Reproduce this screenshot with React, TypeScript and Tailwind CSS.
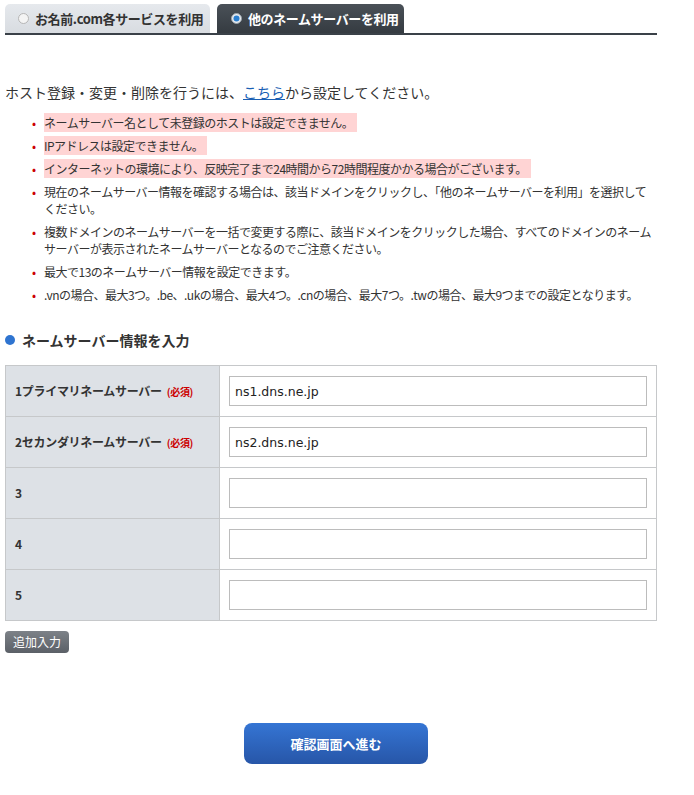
import React from "react";

interface NsRow {
  label: string;
  required: boolean;
  value: string;
}

const rows: NsRow[] = [
  { label: "1プライマリネームサーバー", required: true, value: "ns1.dns.ne.jp" },
  { label: "2セカンダリネームサーバー", required: true, value: "ns2.dns.ne.jp" },
  { label: "3", required: false, value: "" },
  { label: "4", required: false, value: "" },
  { label: "5", required: false, value: "" },
];

const Radio: React.FC<{ on: boolean }> = ({ on }) => (
  <svg width="11" height="11" viewBox="0 0 11 11" className="inline-block mr-[6px] shrink-0">
    <circle cx="5.5" cy="5.5" r="5" fill={on ? "#e8ecf0" : "#f4f4f4"} stroke={on ? "#9aa3ab" : "#b5b5b5"} />
    {on && <circle cx="5.5" cy="5.5" r="3" fill="#2a7fd0" />}
  </svg>
);

const Bullet: React.FC<{ children: React.ReactNode; pink?: boolean }> = ({ children, pink }) => (
  <li className="flex">
    <span className="w-[12px] shrink-0 text-[#c00] text-[12px] leading-[17px]">•</span>
    <span className="leading-[17px]">
      {pink ? <span className="bg-[#ffd4d4] py-[1px] pr-[4px]">{children}</span> : children}
    </span>
  </li>
);

export default function App() {
  return (
    <div
      className="w-[694px] h-[795px] bg-white text-[#333]"
      style={{ fontFamily: '"Noto Sans CJK JP", "DejaVu Sans", sans-serif' }}
    >
      {/* tabs */}
      <div className="pt-[4px] px-[5px]">
        <div className="flex gap-[7px] w-[652px] border-b-2 border-[#3a4148] h-[31px]">
          <div className="w-[205px] h-[29px] rounded-t-[5px] bg-gradient-to-b from-[#e6e9ed] to-[#d8dce1] flex items-center pl-[13px] text-[13px] tracking-[-0.4px] whitespace-nowrap font-bold text-[#333]">
            <Radio on={false} />
            お名前.com各サービスを利用
          </div>
          <div className="w-[187px] h-[29px] rounded-t-[5px] bg-gradient-to-b from-[#4a5158] to-[#353b41] flex items-center pl-[14px] text-[13px] tracking-[-0.4px] whitespace-nowrap font-bold text-white">
            <Radio on={true} />
            他のネームサーバーを利用
          </div>
        </div>
      </div>

      {/* notes */}
      <div className="px-[5px] mt-[47px]">
        <p className="text-[14px] leading-[20px]">
          ホスト登録・変更・削除を行うには、
          <span className="text-[#1a5fb4] underline">こちら</span>
          から設定してください。
        </p>
        <ul className="mt-[12px] ml-[27px] mr-[32px] text-[12px] tracking-[-0.5px] flex flex-col gap-[6px]">
          <Bullet pink>ネームサーバー名として未登録のホストは設定できません。</Bullet>
          <Bullet pink>IPアドレスは設定できません。</Bullet>
          <Bullet pink>インターネットの環境により、反映完了まで24時間から72時間程度かかる場合がございます。</Bullet>
          <Bullet>現在のネームサーバー情報を確認する場合は、該当ドメインをクリックし、「他のネームサーバーを利用」を選択してください。</Bullet>
          <Bullet>複数ドメインのネームサーバーを一括で変更する際に、該当ドメインをクリックした場合、すべてのドメインのネームサーバーが表示されたネームサーバーとなるのでご注意ください。</Bullet>
          <Bullet>最大で13のネームサーバー情報を設定できます。</Bullet>
          <Bullet>.vnの場合、最大3つ。.be、.ukの場合、最大4つ。.cnの場合、最大7つ。.twの場合、最大9つまでの設定となります。</Bullet>
        </ul>

        {/* heading */}
        <h2 className="mt-[27px] flex items-center text-[14px] font-bold leading-[20px]">
          <span className="w-[10px] h-[10px] rounded-full bg-[#2f74d0] mr-[7px]"></span>
          ネームサーバー情報を入力
        </h2>

        {/* table */}
        <table className="mt-[15px] w-[652px] border-collapse">
          <tbody>
            {rows.map((row, i) => (
              <tr key={i} className="h-[51px]">
                <th className="w-[214px] bg-[#dde1e6] border border-[#c6c8ca] text-left pl-[9px] text-[12px] tracking-[-0.3px] font-bold">
                  {row.label}
                  {row.required && (
                    <span className="text-[#c00] text-[10px] ml-[5px]">(必須)</span>
                  )}
                </th>
                <td className="border border-[#c6c8ca] pl-[9px] pr-[9px]">
                  <input
                    type="text"
                    defaultValue={row.value}
                    className="w-[418px] h-[30px] border border-[#bcbcbc] px-[5px] text-[#222] outline-none"
                    style={{ fontFamily: '"DejaVu Sans", sans-serif', fontSize: "12.5px" }}
                  />
                </td>
              </tr>
            ))}
          </tbody>
        </table>

        <button className="mt-[10px] h-[22px] px-[8px] rounded-[4px] bg-gradient-to-b from-[#7d8288] to-[#5b6067] text-white text-[12px] leading-[22px]">
          追加入力
        </button>

        <div className="mt-[70px] ml-[239px]">
          <button className="w-[184px] h-[41px] rounded-[8px] bg-gradient-to-b from-[#3575d4] to-[#2756a8] text-white text-[13px] font-bold">
            確認画面へ進む
          </button>
        </div>
      </div>
    </div>
  );
}
